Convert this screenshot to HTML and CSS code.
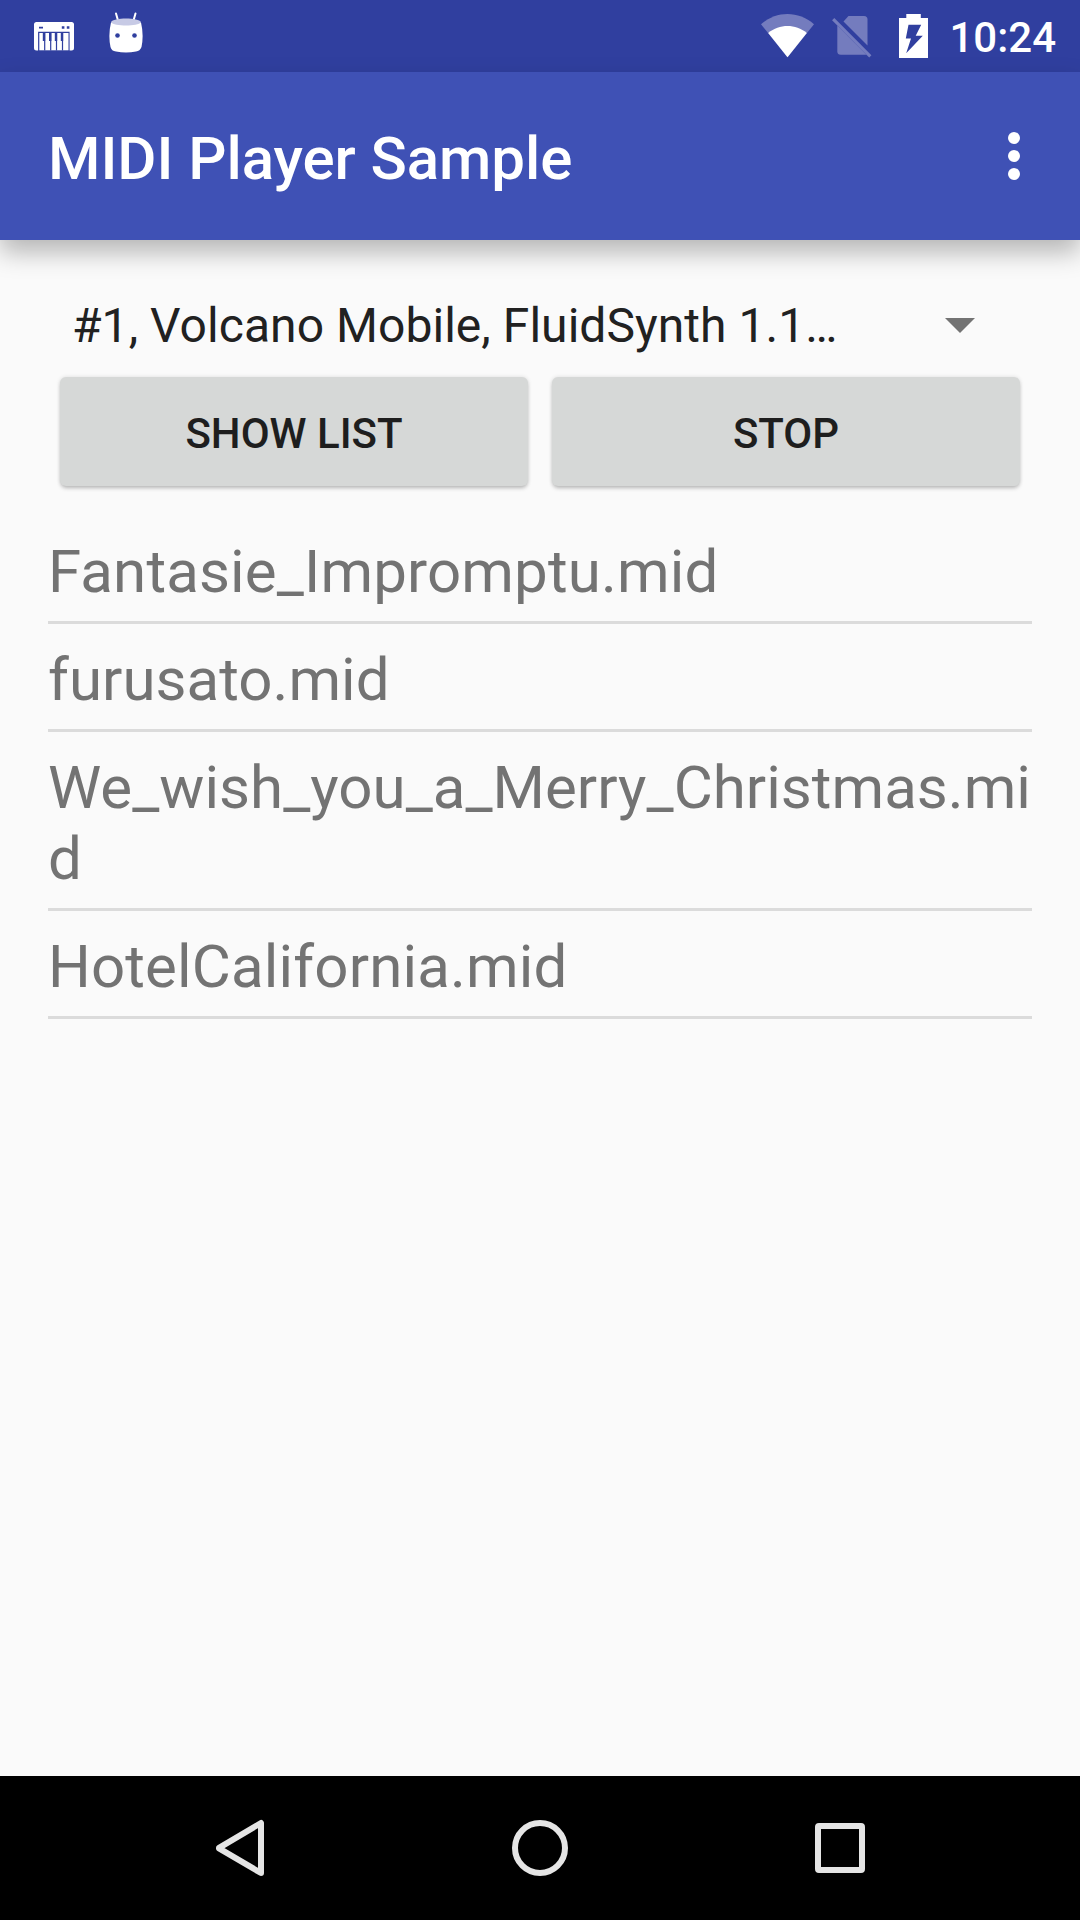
FILE: index.html
```html
<!DOCTYPE html>
<html lang="en">
<head>
<meta charset="utf-8">
<title>MIDI Player Sample</title>
<link rel="stylesheet" href="styles.css">
</head>
<body>
<div class="screen">
  <div class="status-bar">
    <div class="notifications">
      <svg class="icon-keyboard" width="40" height="29" viewBox="0 0 40 29">
        <path fill="#fff" fill-rule="evenodd" d="M2.500 0h35a2.500 2.500 0 0 1 2.500 2.500v23.500a2.500 2.500 0 0 1-2.500 2.500h-1.900v-18.700h-31.500v18.700H2.500A2.500 2.500 0 0 1 0 26V2.500A2.500 2.500 0 0 1 2.500 0zM5 4.800h4v1.600H5zM27.800 4.300h2.600v2.400h-2.600zM32.800 4.300h2.600v2.400h-2.600z"/>
        <path fill="#fff" d="M5.300 11h29.200v17.300H5.300z"/>
        <path stroke="#303f9f" stroke-width="1.200" d="M10.700 11v17.500M16.700 11v17.500M22.500 11v17.500M28.500 11v17.500"/>
        <path stroke="#303f9f" stroke-width="2.400" d="M10 11v8M16.200 11v8M22 11v8M28 11v8"/>
      </svg>
      <svg class="icon-android" width="36" height="41" viewBox="0 0 36 41">
        <path stroke="#fff" stroke-width="2" stroke-linecap="round" d="M8 1.500l2 7M27.500 1.500l-2 7"/>
        <path fill="#fff" d="M3 10.500Q18 6 33 10.500Q36 23 33.500 35Q32 39 28 39.500Q18 41.500 8 39.500Q3.500 39 2.500 35Q0 23 3 10.500z"/>
        <path fill="#c7cae5" d="M3 10.300C5 5.300 31 5.300 33 10.300C30 14.600 6 14.600 3 10.300z"/>
        <circle cx="9.500" cy="23.500" r="2.300" fill="#303f9f"/><circle cx="26.500" cy="23.500" r="2.300" fill="#303f9f"/>
      </svg>
    </div>
    <div class="system">
      <svg class="icon-wifi" width="53" height="44" viewBox="0 0 53 44">
        <path fill="#747cbe" d="M0 10.200C15.500-3.400 37.500-3.400 53 10.200L26.500 43.300z"/>
        <path fill="#fff" d="M7.200 19C18.500 9.800 34.500 9.800 45.800 19L26.500 43.300z"/>
      </svg>
      <svg class="icon-sim" width="40" height="40" viewBox="0 0 40 40">
        <g fill="#747cbe"><path d="M16.500 0H32a3.500 3.500 0 0 1 3.500 3.500V29.500L11.500 5.500z"/><path d="M5.300 9.500L34.500 38.700H8.800a3.500 3.500 0 0 1-3.500-3.500z"/></g>
        <path stroke="#303f9f" stroke-width="3" d="M3.500 1.500L40 38"/>
        <path stroke="#747cbe" stroke-width="3.200" d="M1.200 3.200L38.300 40.300"/>
      </svg>
      <svg class="icon-battery" width="29" height="44" viewBox="0 0 29 44">
        <path fill="#fff" fill-rule="evenodd" d="M7.300 0h14.500v4H29v40H0V4h7.300zM9.500 10.700L6.800 24.500H12L7.200 39.300L23.800 21.700H16.700L22.200 10.700z"/>
      </svg>
      <span class="clock">10:24</span>
    </div>
  </div>
  <header class="app-bar">
    <h1>MIDI Player Sample</h1>
    <svg width="12" height="48" viewBox="0 0 12 48" fill="#fff"><circle cx="6" cy="6" r="6"/><circle cx="6" cy="24" r="6"/><circle cx="6" cy="42" r="6"/></svg>
  </header>
  <main>
    <div class="spinner">
      <span>#1, Volcano Mobile, FluidSynth 1.1…</span>
      <svg width="30" height="15" viewBox="0 0 30 15"><path fill="#737373" d="M0 0h30L15 15z"/></svg>
    </div>
    <div class="buttons">
      <button>SHOW LIST</button>
      <button>STOP</button>
    </div>
    <ul class="files">
      <li class="loose">Fantasie_Impromptu.mid</li>
      <li>furusato.mid</li>
      <li>We_wish_you_a_Merry_Christmas.mid</li>
      <li class="loose">HotelCalifornia.mid</li>
    </ul>
  </main>
  <nav class="nav-bar">
    <svg width="60" height="60" viewBox="0 0 60 60"><path d="M9 29.800L51 5V55L9 30.400z"/></svg>
    <svg width="60" height="60" viewBox="0 0 60 60"><circle cx="30" cy="30" r="25"/></svg>
    <svg width="60" height="60" viewBox="0 0 60 60"><rect x="8" y="8" width="44" height="44" rx="1"/></svg>
  </nav>
</div>
</body>
</html>
```
FILE: styles.css
```css
* {
  box-sizing: border-box;
}

body {
  margin: 0;
  font-family: Roboto, "Liberation Sans", sans-serif;
}

svg {
  display: block;
  flex: none;
}

.screen {
  display: flex;
  flex-direction: column;
  width: 1080px;
  height: 1920px;
  background: #fafafa;
  overflow: hidden;
}

.status-bar {
  display: flex;
  justify-content: space-between;
  height: 72px;
  padding: 0 24px 0 34px;
  background: #303f9f;
}

.notifications,
.system {
  display: flex;
  align-items: flex-start;
}

.icon-keyboard {
  margin-top: 22px;
}

.icon-android {
  margin: 12px 0 0 34px;
}

.icon-wifi {
  margin-top: 14px;
}

.icon-sim {
  margin: 16px 0 0 18px;
  overflow: visible;
}

.icon-battery {
  margin: 14px 21px 0 27px;
}

.clock {
  margin-top: 13px;
  color: #fff;
  font-size: 42px;
  font-weight: 500;
  line-height: 50px;
  white-space: nowrap;
}

.app-bar {
  display: flex;
  justify-content: space-between;
  align-items: flex-start;
  height: 168px;
  padding: 60px 60px 0 48px;
  background: #3f51b5;
  box-shadow: 0 12px 24px rgba(0, 0, 0, 0.28);
}

.app-bar h1 {
  margin: -8px 0 0;
  color: #fff;
  font-size: 60px;
  font-weight: 500;
  letter-spacing: -0.06px;
  line-height: 70px;
}

main {
  flex: 1;
  padding: 48px 48px 0;
}

.spinner {
  display: flex;
  justify-content: space-between;
  align-items: center;
  height: 74px;
  padding: 0 57px 0 24px;
  color: #212121;
  font-size: 48px;
  letter-spacing: 0.05px;
  line-height: 56px;
  white-space: nowrap;
}

.spinner span {
  padding-top: 2px;
}

.buttons {
  display: flex;
  gap: 24px;
  padding: 15px 12px 30px;
}

.buttons button {
  flex: 1;
  height: 109px;
  padding: 5px 0 0;
  border: 0;
  border-radius: 6px;
  background: #d6d8d7;
  box-shadow: 0 3px 4px -1px rgba(0, 0, 0, 0.24), 0 0 4px rgba(0, 0, 0, 0.12);
  color: #1e1e1e;
  font: 500 42px/50px Roboto, "Liberation Sans", sans-serif;
}

.files {
  margin: 0;
  padding: 0;
  list-style: none;
}

.files li {
  padding: 20px 0 14px;
  border-bottom: 3px solid #dbdbdb;
  color: #737373;
  font-size: 60px;
  letter-spacing: 0.04px;
  line-height: 71px;
  overflow-wrap: anywhere;
}

.files .loose {
  letter-spacing: 0.15px;
}

.nav-bar {
  display: flex;
  justify-content: center;
  gap: 240px;
  height: 144px;
  padding-top: 42px;
  background: #000;
}

.nav-bar svg {
  fill: none;
  stroke: #e5e5e5;
  stroke-width: 6px;
  stroke-linejoin: round;
}
```
